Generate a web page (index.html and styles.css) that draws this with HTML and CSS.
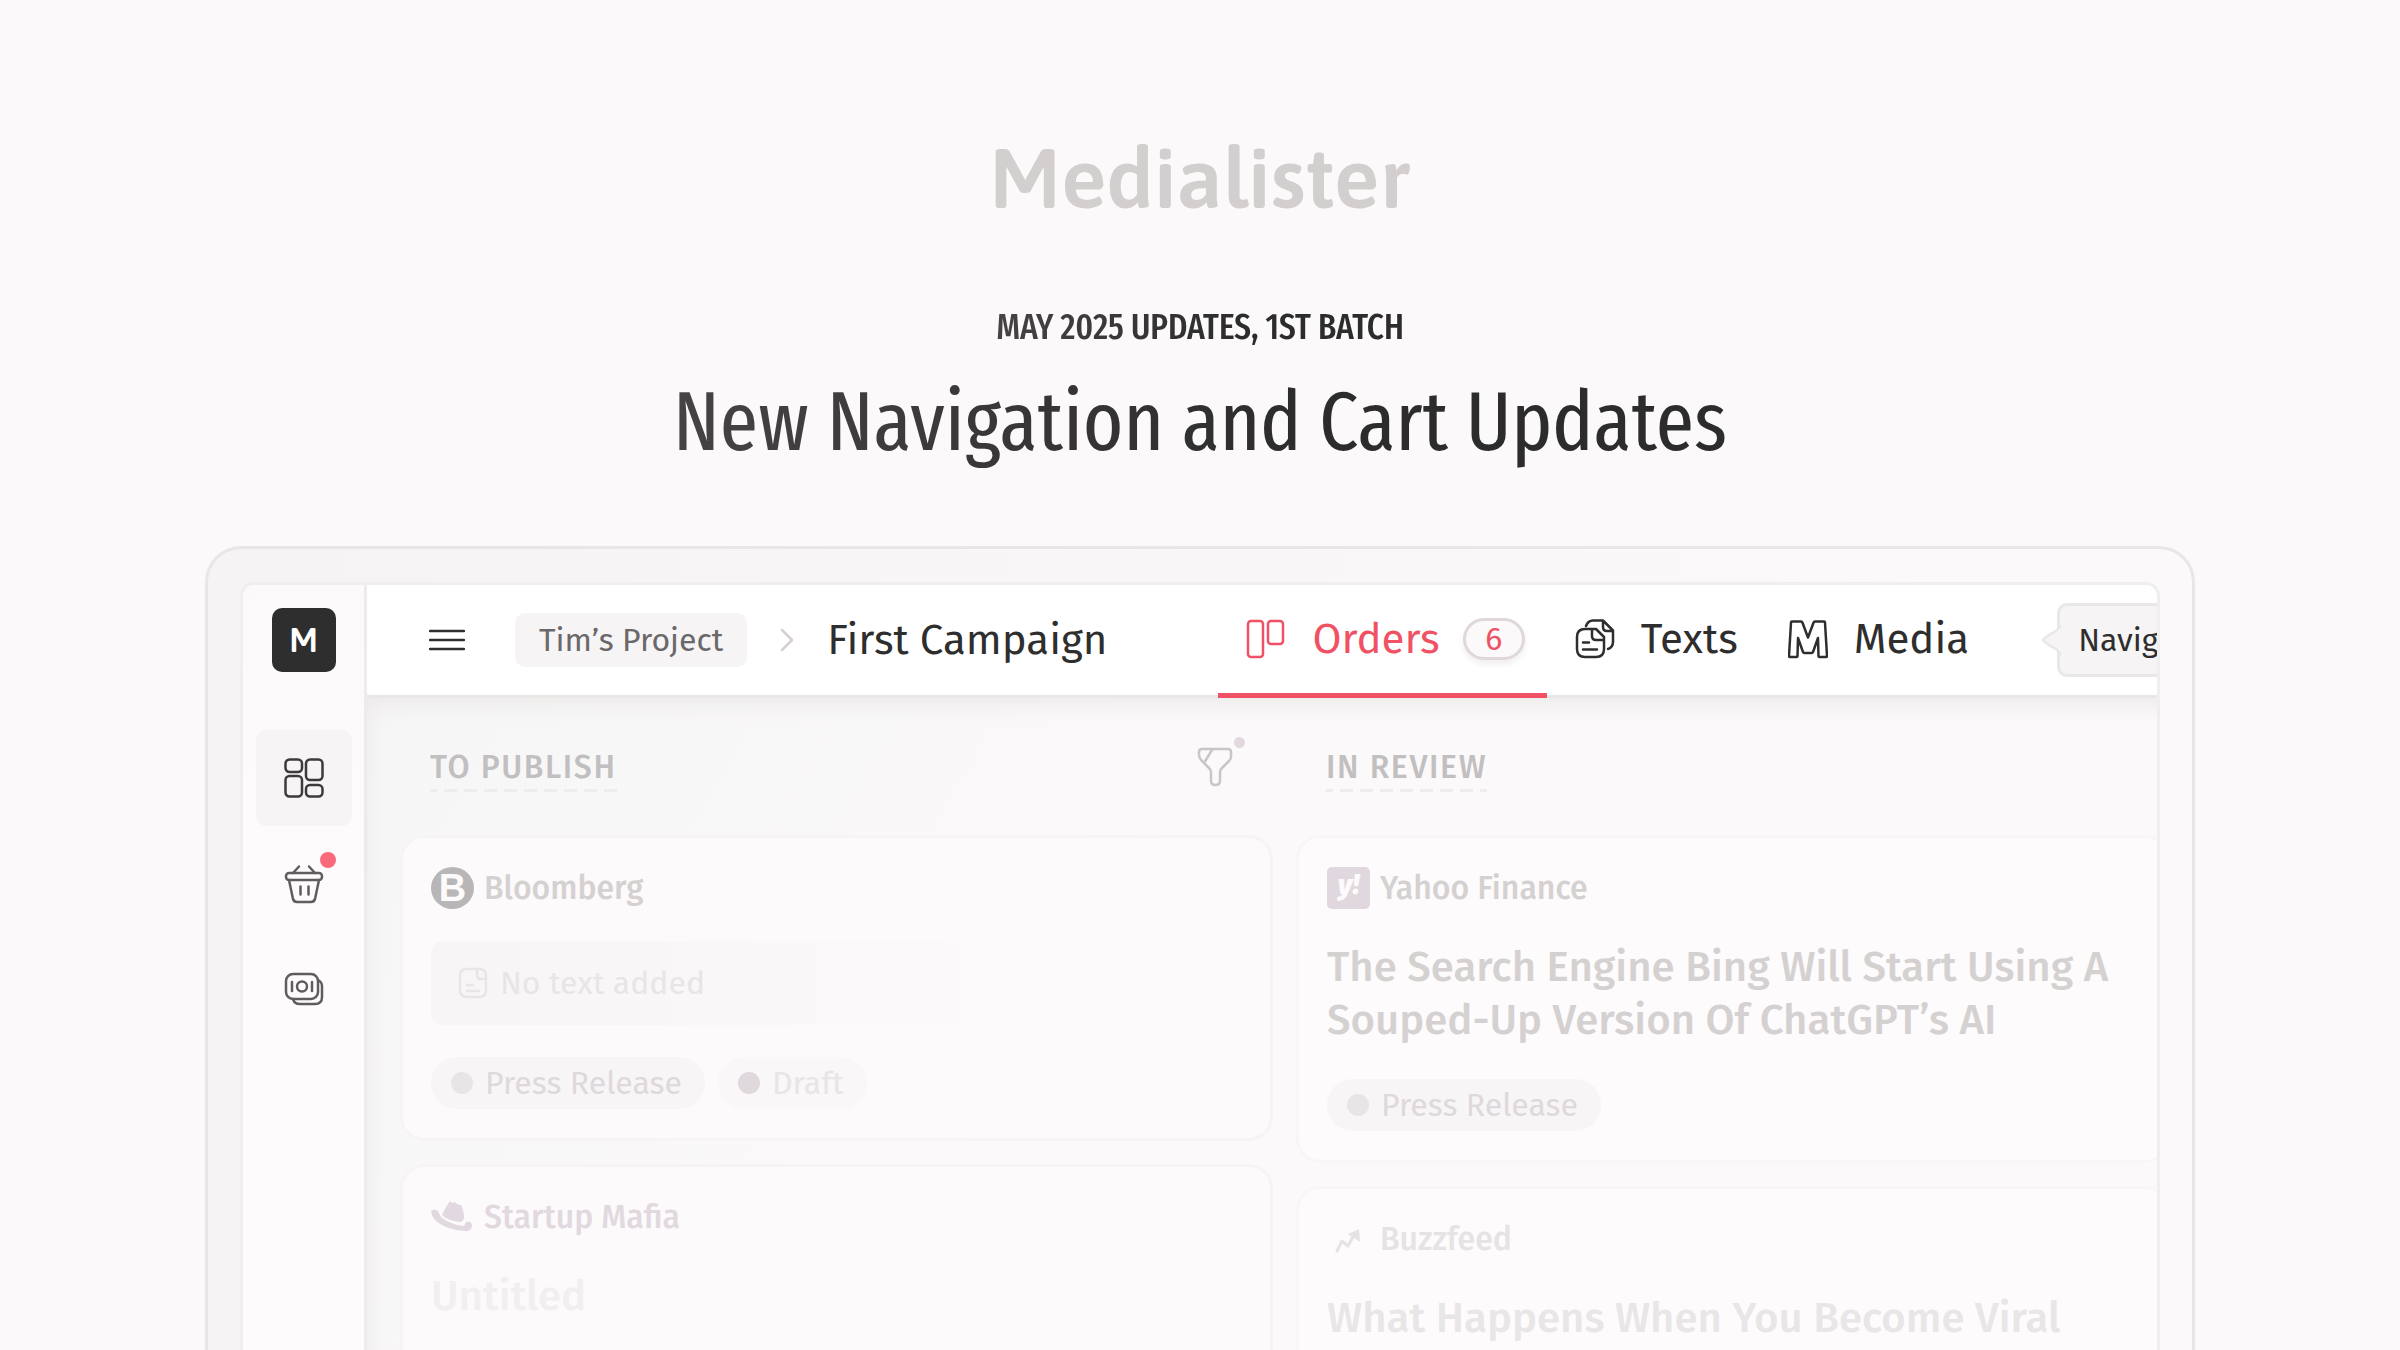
FILE: index.html
```html
<!DOCTYPE html>
<html lang="en">
	<head>
		<meta charset="utf-8">
		<title>Medialister – New Navigation and Cart Updates</title>
		<meta name="viewport" content="width=device-width, initial-scale=1.0">
		<link rel="stylesheet" href="styles.css">
	</head>
	<body>
		<header class="intro">
			<div class="logo">Medialister</div>
			<p class="eyebrow">May 2025 Updates, 1st Batch</p>
			<h1>New Navigation and Cart Updates</h1>
		</header>
		<div class="device">
			<div class="screen">
				<nav class="rail">
					<a class="rail-logo" href="#">M</a>
					<a class="rail-item active" href="#" aria-label="Dashboard">
						<svg width="40" height="40" viewBox="0 0 40 40">
							<rect x="1.500" y="1.500" width="16.500" height="12.500" rx="4"/>
							<rect x="22" y="1.500" width="16.500" height="20.500" rx="4"/>
							<rect x="1.500" y="18" width="16.500" height="20.500" rx="4"/>
							<rect x="22" y="27" width="16.500" height="11.500" rx="4"/>
						</svg>
					</a>
					<a class="rail-item" href="#" aria-label="Cart">
						<svg width="40" height="40" viewBox="0 0 40 40">
							<rect x="2" y="9" width="36" height="7" rx="3"/>
							<path d="M5 16l4 19q1 3 4 3h14q3 0 4-3l4-19M9 9l6-6.500M31 9l-6-6.500M16.500 22.500v8M24.500 22.500v8"/>
						</svg>
						<span class="rail-dot"></span>
					</a>
					<a class="rail-item" href="#" aria-label="Billing">
						<svg width="40" height="40" viewBox="0 0 40 40">
							<rect x="2" y="4" width="32" height="25" rx="7"/>
							<path d="M34 10q4 2 4 6v11q0 7-7 7H16q-6 0-7-5"/>
							<circle cx="18" cy="16.500" r="5"/>
							<path d="M8 12v9M28 12v9"/>
						</svg>
					</a>
				</nav>
				<main class="main">
					<div class="topbar">
						<button class="menu" type="button" aria-label="Menu">
							<svg width="36" height="24" viewBox="0 0 36 24"><path d="M1 3h34M1 12h34M1 21h34"/></svg>
						</button>
						<a class="project" href="#">Tim’s Project</a>
						<svg class="chevron" width="16" height="26" viewBox="0 0 16 26"><path d="M3 3l10 10L3 23"/></svg>
						<span class="campaign">First Campaign</span>
						<div class="tabs">
							<a class="tab active" href="#">
								<svg width="40" height="40" viewBox="0 0 40 40">
									<rect x="2" y="2" width="15" height="36" rx="3"/>
									<rect x="22" y="2" width="15" height="23" rx="3"/>
								</svg>
								Orders
								<span class="badge">6</span>
							</a>
							<a class="tab" href="#">
								<svg width="40" height="40" viewBox="0 0 40 40">
									<path d="M10 10h11l8 8v12q0 8-8 8h-11q-8 0-8-8v-12q0-8 8-8zM17 10.500v6.500q0 4 4 4h7.500M8 23.500h6M8 30.500h14"/>
									<path d="M11 7q2-5.500 7-5.500h10l10 10v11q0 6-5 7.500M28 2v6q0 4 4 4h5.500"/>
								</svg>
								Texts
							</a>
							<a class="tab" href="#">
								<svg width="40" height="40" viewBox="0 0 40 40">
									<path d="M4 2.500h9q1 0 1.400 1L20 18.500l5.600-15q.4-1 1.400-1h9q1 0 1 1l2 33.500q0 1-1 1h-6.500q-1 0-1-1L30 19l-5 14q-.4 1-1.400 1h-7.200q-1 0-1.400-1L10 19l-.5 18q0 1-1 1H2q-1 0-1-1L3 3.500q0-1 1-1z"/>
								</svg>
								Media
							</a>
						</div>
						<div class="hint">
							<svg width="20" height="34" viewBox="0 0 20 34"><path d="M20 2C17 8 13 9 8 12L3 15.500q-2 1.500 0 3L8 22C13 25 17 26 20 32"/></svg>
							Navigation
						</div>
					</div>
					<div class="board">
						<section class="column">
							<div class="column-head">
								<h2>To publish</h2>
								<button class="filter" type="button" aria-label="Filter">
									<svg width="36" height="40" viewBox="0 0 36 40">
										<path d="M5 2h26q3 0 3 3v5q0 2-2 4l-7 7q-2 2-2 4v9q0 4-4.500 4t-4.500-4v-9q0-2-2-4l-7-7q-3-3-3-6V5q0-3 3-3zM15 3L7 16"/>
									</svg>
									<span class="filter-dot"></span>
								</button>
							</div>
							<article class="card">
								<div class="outlet dim-1">
									<span class="bloomberg">B</span>
									Bloomberg
								</div>
								<div class="no-text">
									<svg width="30" height="32" viewBox="0 0 30 32">
										<path d="M9 2h12q7 0 7 7v14q0 7-7 7H9q-7 0-7-7V9q0-7 7-7zM19 3v5q0 4 4 4h4M9 18h6M9 24h12"/>
									</svg>
									No text added
								</div>
								<div class="tags">
									<span class="tag">Press Release</span>
									<span class="tag draft">Draft</span>
								</div>
							</article>
							<article class="card">
								<div class="outlet dim-2">
									<svg class="hat" width="43" height="42" viewBox="0 0 43 42">
										<path d="M11 19C13 14 16 9 19 5q2 3 5 1 2 3 6 3c2 4 3 8 3 13q-1 4-5 4c-6-1-13-3-17-7z"/>
										<path d="M0 15q3-3 7 0l3 6c6 5 14 8 23 9l2-4q6-1 6 4-1 6-7 5C20 34 1 28 0 15z"/>
									</svg>
									Startup Mafia
								</div>
								<h3 class="faint-2">Untitled</h3>
							</article>
						</section>
						<section class="column">
							<div class="column-head">
								<h2>In review</h2>
							</div>
							<article class="card light">
								<div class="outlet dim-1">
									<span class="yahoo">y!</span>
									Yahoo Finance
								</div>
								<h3>The Search Engine Bing Will Start Using A Souped-Up Version Of ChatGPT’s AI</h3>
								<div class="tags">
									<span class="tag">Press Release</span>
								</div>
							</article>
							<article class="card light">
								<div class="outlet dim-3">
									<svg class="trend" width="43" height="42" viewBox="0 0 43 42">
										<path d="M10 33l5-10 6 5 6-11"/>
										<path class="head" d="M21 16l11-5 1 13z"/>
									</svg>
									Buzzfeed
								</div>
								<h3 class="faint-1">What Happens When You Become Viral</h3>
							</article>
						</section>
					</div>
				</main>
			</div>
		</div>
	</body>
</html>
```
FILE: styles.css
```css
* {
	box-sizing: border-box;
}
body {
	margin: 0;
	height: 100vh;
	overflow: hidden;
	display: flex;
	flex-direction: column;
	background-color: #fbf9fa;
	color: #2e2e2e;
	font: 32px 'Fira Sans', 'Noto Sans', sans-serif;
}
a {
	color: inherit;
	text-decoration: none;
}
button {
	font: inherit;
	color: inherit;
	background: none;
	border: 0;
	padding: 0;
}
svg {
	display: block;
	flex: none;
	fill: none;
	stroke: currentColor;
	stroke-width: 2.5;
	stroke-linecap: round;
	stroke-linejoin: round;
}
h1, h2, h3, p {
	margin: 0;
	font-weight: 500;
}

.intro {
	padding: 128px 24px 74px;
	display: flex;
	flex-direction: column;
	align-items: center;
	text-align: center;
}
.logo {
	font: 600 85px/100px Asap, 'Fira Sans', sans-serif;
	color: #d3cfce;
}
.eyebrow, h1 {
	font-family: 'Fira Sans Extra Condensed', 'Fira Sans Condensed', 'Open Sans', sans-serif;
	background: linear-gradient(90deg, #454343, #2d2c2c 60%);
	-webkit-background-clip: text;
	background-clip: text;
	color: transparent;
}
.eyebrow {
	margin: 77px 0 23px;
	font-size: 36px;
	line-height: 44px;
	text-transform: uppercase;
}
h1 {
	font-size: 84px;
	font-weight: 400;
	line-height: 100px;
}

.device {
	flex: 1;
	min-height: 0;
	margin: 0 205px;
	padding: 33px 32px 0;
	display: flex;
	border: 3px solid #e8e6e6;
	border-bottom: 0;
	border-radius: 36px 36px 0 0;
	background: linear-gradient(90deg, #f5f3f4, #fbf9fa 90%);
}
.screen {
	flex: 1;
	min-width: 0;
	display: flex;
	overflow: hidden;
	border: 3px solid #f0efee;
	border-bottom: 0;
	border-radius: 14px 14px 0 0;
	background-color: #fff;
}

.rail {
	flex: none;
	width: 124px;
	padding-top: 23px;
	display: flex;
	flex-direction: column;
	align-items: center;
	gap: 10px;
	border-right: 3px solid #eeebec;
	background: linear-gradient(#fbf9fa, #fdfbfc 300px);
	color: #5f5d5e;
}
.rail-logo {
	width: 64px;
	height: 64px;
	margin-bottom: 48px;
	border-radius: 10px;
	background-color: #2e2e2e;
	color: #fff;
	font: 600 34px/64px Asap, 'Fira Sans', sans-serif;
	text-align: center;
}
.rail-item {
	position: relative;
	width: 96px;
	height: 96px;
	display: flex;
	align-items: center;
	justify-content: center;
	border-radius: 10px;
}
.rail-item.active {
	background-color: #f6f4f5;
	color: #3c3a3b;
}
.rail-dot {
	position: absolute;
	top: 16px;
	right: 16px;
	width: 16px;
	height: 16px;
	border-radius: 50%;
	background-color: #f8697c;
}

.main {
	flex: 1;
	min-width: 0;
	display: flex;
	flex-direction: column;
}
.topbar {
	height: 113px;
	flex: none;
	padding-left: 62px;
	display: flex;
	align-items: center;
	border-bottom: 3px solid #eae7e8;
	white-space: nowrap;
}
.topbar > * {
	flex: none;
}
.menu {
	margin-right: 50px;
}
.project {
	height: 54px;
	padding: 0 24px;
	border-radius: 10px;
	background-color: #f6f4f5;
	color: #6a6868;
	line-height: 54px;
}
.chevron {
	margin: 0 32px;
	color: #d5cfd2;
}
.campaign, .tab {
	font-size: 42px;
}
.tabs {
	align-self: stretch;
	margin: 0 48px 0 111px;
	display: flex;
}
.tab {
	margin-bottom: -3px;
	padding: 0 22px 0 28px;
	display: flex;
	align-items: center;
	gap: 26px;
	border-bottom: 5px solid transparent;
}
.tab.active {
	border-color: #f05164;
	color: #f05164;
}
.badge {
	width: 62px;
	height: 42px;
	margin-left: -3px;
	border: 3px solid #dfd7dc;
	border-radius: 21px;
	background-color: #fbf9fa;
	box-shadow: 0 4px 6px #f1eeef;
	font-size: 32px;
	line-height: 36px;
	text-align: center;
}
.hint {
	position: relative;
	height: 74px;
	margin-left: 18px;
	padding: 0 18px;
	border: 3px solid #eae7e8;
	border-radius: 10px;
	background-color: #f6f4f5;
	line-height: 68px;
}
.hint svg {
	position: absolute;
	top: 17px;
	right: 100%;
	margin-right: -1px;
	fill: #f6f4f5;
	stroke: #eae7e8;
}

.board {
	flex: 1;
	min-height: 0;
	margin-right: -12px;
	padding-left: 33px;
	display: grid;
	grid-template-columns: repeat(2, minmax(0, 1fr));
	gap: 23px;
	background: linear-gradient(120deg, #f7f6f6, #fbf9fa 40%);
	box-shadow: inset 6px 12px 22px -6px #ebe9e8;
}
.column {
	display: flex;
	flex-direction: column;
	gap: 23px;
}
.column-head {
	height: 115px;
	flex: none;
	padding: 0 40px 0 30px;
	display: flex;
	align-items: flex-start;
	justify-content: space-between;
}
h2 {
	margin-top: 49px;
	padding-bottom: 5px;
	background: repeating-linear-gradient(90deg, #eeecec 0 7px, transparent 7px 14px, #eeecec 14px 20px) 0 100% / 100% 3px no-repeat;
	color: #c1bfbf;
	font-size: 32px;
	line-height: 40px;
	letter-spacing: 0.05em;
	text-transform: uppercase;
}
.filter {
	position: relative;
	margin-top: 49px;
	color: #c9c6c7;
}
.filter-dot {
	position: absolute;
	top: -10px;
	right: -12px;
	width: 11px;
	height: 11px;
	border-radius: 50%;
	background-color: #e1d9df;
}

.card {
	flex: none;
	padding: 29px 28px;
	display: flex;
	flex-direction: column;
	gap: 32px;
	border: 3px solid #f6f4f5;
	border-radius: 24px;
	background-color: #fcfafb;
}
.column-head + .card {
	margin-top: -1px;
}
.card:last-child {
	flex: 1 0 auto;
	margin-bottom: -40px;
}
.card.light {
	border-color: #f8f6f7;
	background-color: #fdfbfc;
}
.outlet {
	height: 42px;
	display: flex;
	align-items: center;
	gap: 10px;
	font-weight: 500;
}
.dim-1 {
	color: #d5d1d1;
}
.dim-2 {
	color: #e1d9df;
}
.dim-3 {
	color: #e6e3e4;
}
.bloomberg, .yahoo {
	width: 43px;
	height: 42px;
	color: #fcfafb;
	text-align: center;
}
.bloomberg {
	border-radius: 50%;
	background-color: #b8b6b7;
	font: 700 38px/42px 'Liberation Sans', sans-serif;
}
.yahoo {
	border-radius: 5px;
	background-color: #e1d7de;
	font: italic 900 28px/36px 'Fira Sans', sans-serif;
}
.hat {
	fill: currentColor;
	stroke: none;
}
.trend {
	stroke-width: 3;
}
.trend .head {
	fill: currentColor;
	stroke: none;
}
.no-text {
	height: 84px;
	padding-left: 27px;
	display: flex;
	align-items: center;
	gap: 12px;
	border-radius: 12px;
	background: linear-gradient(90deg, #f7f5f6, #fcfafb 80%);
	color: #e8e5e6;
}
.tags {
	display: flex;
	gap: 13px;
}
.tag {
	height: 52px;
	padding: 0 23px 0 20px;
	display: flex;
	align-items: center;
	gap: 12px;
	border-radius: 26px;
	background-color: #f7f5f6;
	color: #dfd8dc;
}
.tag::before {
	content: '';
	width: 22px;
	height: 22px;
	border-radius: 50%;
	background-color: #e8e5e6;
}
.tag.draft {
	background-color: #f9f7f8;
	color: #e8e5e6;
}
.tag.draft::before {
	background-color: #dfd8dd;
}
h3 {
	color: #d5d1d1;
	font-size: 42px;
	line-height: 53px;
}
.faint-1 {
	color: #e8e6e6;
}
.faint-2 {
	color: #f1efef;
}
```
